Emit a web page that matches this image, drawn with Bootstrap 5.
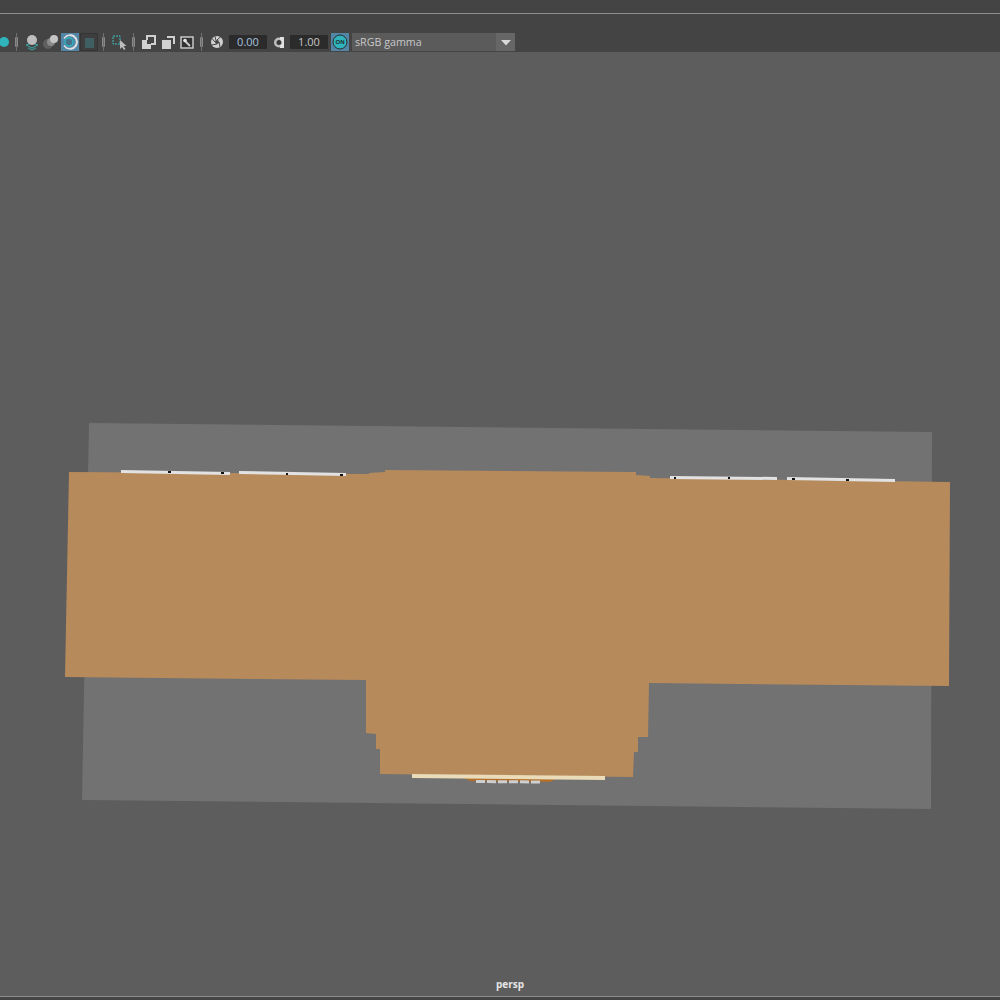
<!DOCTYPE html>
<html lang="en">
<head>
  <meta charset="UTF-8" />
  <title>persp</title>
  <link href="https://cdn.jsdelivr.net/npm/bootstrap@5.3.3/dist/css/bootstrap.min.css" rel="stylesheet" />
  <style>
    html, body {
      height: 100%;
      overflow: hidden;
      background: #5d5d5d;
      font-family: "Open Sans", "Noto Sans", sans-serif;
    }
    .app-shell {
      width: 1000px;
      height: 1000px;
    }
    .top-panel {
      height: 52px;
      background: #444;
    }
    .menu-strip {
      height: 14px;
      border-bottom: 1px solid #8f8f8f;
    }
    .tool-strip {
      height: 38px;
      padding-bottom: 1px;
      margin-left: -5px;
    }
    .tool-btn {
      width: 18px;
      height: 18px;
      flex: none;
    }
    .tool-btn svg {
      display: block;
    }
    .tool-on {
      background: #5285a6;
    }
    .tool-dark {
      background: #3e3e3e;
      outline: 1px solid #343434;
      outline-offset: -1px;
    }
    .tool-sep {
      width: 3px;
      height: 10px;
      margin-right: -1px;
      margin-bottom: 4px;
      background: #888;
      border-radius: 1px;
      flex: none;
      position: relative;
    }
    .tool-sep::before {
      content: "";
      position: absolute;
      left: 1px;
      top: -4px;
      width: 1px;
      height: 18px;
      background: #6e6e6e;
    }
    .gap-1px { margin-left: 1px; }
    .gap-2px { margin-left: 2px; }
    .gap-3px { margin-left: 3px; }
    .gap-5px { margin-left: 5px; }
    .gap-6px { margin-left: 6px; }
    .gap-7px { margin-left: 7px; }
    .num-box {
      width: 38px;
      height: 14px;
      margin-bottom: 2px;
      background: #2b2b2b;
      border-radius: 1px;
      color: #c8c8c8;
      font-size: 11px;
      line-height: 14px;
      text-align: center;
      flex: none;
    }
    .num-blue {
      color: #a9c4e0;
    }
    .gamma-box {
      width: 163px;
      height: 18px;
      background: #5b5b5b;
      color: #c8c8c8;
      font-size: 10.7px;
      line-height: 19px;
      padding-left: 3px;
      flex: none;
    }
    .gamma-arrow {
      width: 19px;
      height: 18px;
      background: #666;
    }
    .viewport-area {
      height: 944px;
      background: #5d5d5d;
    }
    .scene-svg {
      position: absolute;
      left: 0;
      top: 0;
    }
    .cam-label {
      position: absolute;
      left: 0;
      top: 925px;
      width: 1020px;
      text-align: center;
      color: #e6e6e6;
      font-size: 10px;
      font-weight: 700;
      line-height: 14px;
    }
    .bottom-line {
      height: 4px;
      background: #444;
      border-top: 1px solid #8c8c8c;
    }
  </style>
</head>
<body>
  <div class="app-shell d-flex flex-column">
    <div class="top-panel">
      <div class="menu-strip"></div>
      <div class="tool-strip d-flex align-items-end">
        <div class="tool-btn"><svg width="18" height="18"><circle cx="9" cy="9" r="5" fill="#2fb3bd"/></svg></div>
        <div class="tool-sep gap-2px"></div>
        <div class="tool-btn gap-6px"><svg width="18" height="18"><path d="M3 12l6 3 6-3-6-2zM5 15l4 2 4-2" fill="none" stroke="#3aa6a6"/><circle cx="9" cy="7" r="5" fill="#bdbdbd"/></svg></div>
        <div class="tool-btn gap-1px"><svg width="18" height="18"><circle cx="6" cy="11" r="5" fill="#5f5f5f"/><circle cx="9" cy="9" r="4" fill="#8a8a8a"/><circle cx="12" cy="6" r="4" fill="#c4c4c4"/></svg></div>
        <div class="tool-btn tool-on gap-1px"><svg width="18" height="18"><path d="M9 2l3.500 1 2.500 2.500 1 3.500-1 3.500-2.500 2.500-3.500 1" fill="none" stroke="#e0e0e0" stroke-width="2"/><path d="M9 2l-3.500 1-2.500 2.500" fill="none" stroke="#e0e0e0" stroke-width="1.500"/><path d="M3 12.500l2.500 2.500 3.500 1" fill="none" stroke="#e0e0e0" stroke-width="1.500"/><circle cx="8" cy="9" r="4" fill="#4a7088" stroke="#2fb3bd" stroke-width="1.400"/></svg></div>
        <div class="tool-btn tool-dark gap-1px"><svg width="18" height="18"><rect x="5" y="5" width="9" height="10" fill="#3f5f62"/></svg></div>
        <div class="tool-sep ms-1"></div>
        <div class="tool-btn gap-7px"><svg width="18" height="18"><rect x="2" y="3" width="7" height="8" fill="none" stroke="#3fc0c0" stroke-dasharray="2 1"/><path d="M9 7v9l2-2 2 3 1.500-1-2-3h3z" fill="#bdbdbd"/></svg></div>
        <div class="tool-sep gap-3px"></div>
        <div class="tool-btn gap-5px"><svg width="18" height="18"><rect x="8" y="3" width="8" height="8" fill="none" stroke="#d0d0d0" stroke-width="2"/><rect x="3" y="7" width="9" height="9" fill="#d0d0d0"/><rect x="8" y="7" width="4" height="4" fill="#444"/></svg></div>
        <div class="tool-btn gap-2px"><svg width="18" height="18"><path d="M8 4h7v7" fill="none" stroke="#d0d0d0" stroke-width="2"/><rect x="3" y="7" width="9" height="9" fill="#d0d0d0"/></svg></div>
        <div class="tool-btn gap-1px"><svg width="18" height="18"><rect x="3" y="4" width="12" height="11" fill="#333" stroke="#d0d0d0" stroke-width="1.400"/><path d="M6 7l6 6" stroke="#d0d0d0" stroke-width="1.800"/><circle cx="7" cy="7.500" r="1.800" fill="#e6e6e6"/></svg></div>
        <div class="tool-sep ms-1"></div>
        <div class="tool-btn gap-5px"><svg width="18" height="18"><circle cx="10" cy="9" r="6" fill="#d0d0d0"/><circle cx="10" cy="9" r="2" fill="#444"/><path d="M10 7l4-3.500M12 9l1 5M10 11l-5 1M8 9l-3-3.500M9 7.500l-1-4" stroke="#444"/></svg></div>
        <div class="num-box num-blue ms-1">0.00</div>
        <div class="tool-btn gap-3px"><svg width="18" height="18"><circle cx="9" cy="9.500" r="5" fill="#bdbdbd"/><rect x="10" y="4" width="4" height="11" fill="#e0e0e0"/><circle cx="9" cy="9.500" r="2.500" fill="#3a3a3a"/></svg></div>
        <div class="num-box gap-2px">1.00</div>
        <div class="tool-btn tool-on gap-3px"><svg width="18" height="18"><circle cx="9" cy="9" r="7" fill="#2fb3bd" stroke="#2c2c2c"/><text x="9" y="11.300" text-anchor="middle" font-size="6" font-weight="700" fill="#1f2f2f" font-family="Liberation Sans, sans-serif">ON</text></svg></div>
        <div class="gamma-box d-flex justify-content-between gap-3px">
          <span>sRGB gamma</span>
          <span class="gamma-arrow d-flex align-items-center justify-content-center"><svg width="12" height="7"><path d="M1 1h10L6 6.500z" fill="#d8d8d8"/></svg></span>
        </div>
      </div>
    </div>
    <div class="viewport-area flex-grow-1 position-relative">
      <svg class="scene-svg" width="1000" height="944" viewBox="0 52 1000 944">
        <polygon points="89,423 932,432 931,809 82,800" fill="#727272"/>
        <polygon points="464,778 556,779 550,782 470,781" fill="#b06f2c"/>
        <polygon points="69,472 369,474 369,473 385,472 385,470 632,472 636,472 636,475 650,476 650,478 950,482 949,686 649,683 648,737 638,737 638,752 634,752 633,777 380,774 380,749 376,749 376,734 366,733 366,680 65,677" fill="#b78a5c"/>
        <polygon points="121,470 230,472 230,475 121,473" fill="#e2e2e2"/>
        <polygon points="239,471 346,473 346,476 239,474" fill="#e2e2e2"/>
        <polygon points="670,476 777,477 777,480 670,479" fill="#e2e2e2"/>
        <polygon points="787,477 895,479 895,482 787,480" fill="#e2e2e2"/>
        <g fill="#111">
          <rect x="168" y="471" width="3" height="2"/>
          <rect x="221" y="472" width="3" height="2"/>
          <rect x="286" y="473" width="2" height="2"/>
          <rect x="340" y="474" width="3" height="2"/>
          <rect x="674" y="477" width="2" height="2"/>
          <rect x="728" y="477" width="2" height="2"/>
          <rect x="792" y="478" width="3" height="2"/>
          <rect x="846" y="479" width="3" height="2"/>
        </g>
        <polygon points="412,774 605,776 605,780 412,778" fill="#eadcb8"/>
        <line x1="476" y1="781.500" x2="540" y2="782" stroke="#cfcfcf" stroke-width="3" stroke-dasharray="9 2"/>
      </svg>
      <div class="cam-label">persp</div>
    </div>
    <div class="bottom-line"></div>
  </div>
  <script src="https://cdn.jsdelivr.net/npm/bootstrap@5.3.3/dist/js/bootstrap.bundle.min.js"></script>
</body>
</html>
